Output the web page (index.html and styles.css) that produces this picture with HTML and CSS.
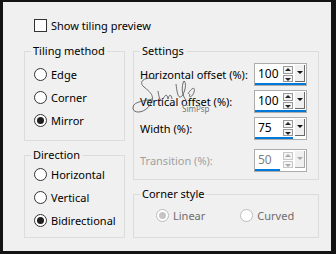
FILE: index.html
```html
<!DOCTYPE html>
<html lang="en">
<head>
    <meta charset="UTF-8">
    <title>Tiling options</title>
    <link rel="stylesheet" href="styles.css">
</head>
<body>
<div class="frame">
    <label class="check-row"><span class="checkbox"></span>Show tiling preview</label>
    <div class="columns">
        <div class="col col-left">
            <fieldset class="group tiling">
                <legend>Tiling method</legend>
                <div class="radio"><span class="mark"></span>Edge</div>
                <div class="radio"><span class="mark"></span>Corner</div>
                <div class="radio"><span class="mark on"></span>Mirror</div>
            </fieldset>
            <fieldset class="group direction">
                <legend>Direction</legend>
                <div class="radio"><span class="mark"></span>Horizontal</div>
                <div class="radio"><span class="mark"></span>Vertical</div>
                <div class="radio"><span class="mark on"></span>Bidirectional</div>
            </fieldset>
        </div>
        <div class="col col-right">
            <fieldset class="group settings">
                <legend>Settings</legend>
                <div class="row">
                    <span class="label">Horizontal offset (%):</span>
                    <div class="spin">
                        <div class="spin-top"><span class="value">100</span><span class="arrows"><span class="up"></span><span class="down"></span></span><span class="drop"></span></div>
                        <span class="bar" style="width:51px"></span>
                    </div>
                </div>
                <div class="row">
                    <span class="label">Vertical offset (%):</span>
                    <div class="spin">
                        <div class="spin-top"><span class="value">100</span><span class="arrows"><span class="up"></span><span class="down"></span></span><span class="drop"></span></div>
                        <span class="bar" style="width:51px"></span>
                    </div>
                </div>
                <div class="row">
                    <span class="label">Width (%):</span>
                    <div class="spin">
                        <div class="spin-top"><span class="value">75</span><span class="arrows"><span class="up"></span><span class="down"></span></span><span class="drop"></span></div>
                        <span class="bar" style="width:38px"></span>
                    </div>
                </div>
                <div class="row disabled">
                    <span class="label">Transition (%):</span>
                    <div class="spin">
                        <div class="spin-top"><span class="value">50</span><span class="arrows"><span class="up"></span><span class="down"></span></span><span class="drop"></span></div>
                        <span class="bar" style="width:25px"></span>
                    </div>
                </div>
            </fieldset>
            <fieldset class="group corner">
                <legend>Corner style</legend>
                <div class="corner-row">
                    <div class="radio off"><span class="mark on"></span>Linear</div>
                    <div class="radio off"><span class="mark"></span>Curved</div>
                </div>
            </fieldset>
        </div>
    </div>

    <!-- signature watermark -->
    <div class="stamp">
        <svg width="80" height="45" viewBox="0 0 80 45">
            <path d="M26 5 C14 2 8 8 14 13 C20 18 26 22 20 31 C14 40 2 40 3 33 C4 27 16 27 22 25 M28 17 C29 23 30 29 33 25 C35 21 37 19 38 25 C39 21 41 19 42 25 M46 10 C47 18 48 26 52 22 C55 18 57 9 54 7 C51 12 52 22 56 26 M58 20 C61 14 66 12 64 18 C62 24 58 24 60 20" fill="none" stroke="#4a4a4a" stroke-width="0.8"/>
        </svg>
        <span class="stamp-text">SimPsp</span>
    </div>
</div>
</body>
</html>
```

FILE: styles.css
```css
body {
    margin: 0;
    font-family: 'Noto Sans', sans-serif;
    font-size: 11px;
    color: #000;
}
.frame {
    position: relative;
    width: 336px;
    height: 254px;
    box-sizing: border-box;
    border-style: solid;
    border-color: #141414;
    border-width: 2px 5px 3px 3px;
    background-color: #f0f0f0;
    padding: 17px 0 0 21px;
}
.check-row {
    display: flex;
    align-items: center;
    gap: 4px;
    height: 13px;
    margin-left: 10px;
}
.checkbox {
    width: 11px;
    height: 11px;
    border: 1px solid #333;
    background-color: #fff;
}
.columns {
    display: flex;
    gap: 8px;
    margin-top: 11px;
}
.col {
    display: flex;
    flex-direction: column;
    gap: 6px;
}
.col-left {
    width: 101px;
}
.col-right {
    width: 186px;
}

/* group boxes */
.group {
    margin: 0;
    min-width: 0;
    box-sizing: border-box;
    border: 1px solid #dcdcdc;
    padding: 0 0 0 6px;
}
.group legend {
    padding: 0 2px;
    line-height: 16px;
}
.tiling {
    height: 98px;
    padding-top: 4px;
}
.direction {
    height: 91px;
}
.settings {
    height: 137px;
    padding-top: 2px;
    padding-right: 11px;
}
.corner {
    height: 52px;
    padding-top: 2px;
}

/* radio buttons */
.radio {
    display: flex;
    align-items: center;
    gap: 4px;
    height: 23px;
    margin-left: 3px;
}
.mark {
    width: 11px;
    height: 11px;
    border: 1px solid #333;
    border-radius: 50%;
    background-color: #fff;
    display: flex;
    align-items: center;
    justify-content: center;
}
.mark.on::after {
    content: "";
    width: 7px;
    height: 7px;
    border-radius: 50%;
    background-color: #1f1f1f;
}
.radio.off {
    color: #6d6d6d;
}
.radio.off .mark {
    border-color: #bcbcbc;
}
.radio.off .mark.on::after {
    background-color: #c4c4c4;
}
.corner-row {
    display: flex;
    margin-left: 13px;
    gap: 32px;
}

/* settings rows */
.row {
    display: flex;
    align-items: center;
    justify-content: space-between;
    height: 27px;
}
.row.disabled {
    margin-top: 5px;
}
.row.disabled .label {
    color: #a0a0a0;
}
.spin {
    width: 53px;
    height: 23px;
    box-sizing: border-box;
    border: 1px solid #acacac;
    background-color: #fff;
    display: flex;
    flex-direction: column;
}
.spin-top {
    display: flex;
    height: 18px;
}
.value {
    flex: 1;
    padding-left: 3px;
    font-size: 12px;
    line-height: 19px;
}
.arrows {
    display: flex;
    flex-direction: column;
    margin-top: 2px;
    margin-right: 2px;
}
.up, .down {
    width: 8px;
    height: 6px;
    border: 1px solid #999;
    background-color: #f4f4f4;
    position: relative;
}
.down {
    margin-top: 1px;
}
.up::after, .down::after {
    content: "";
    position: absolute;
    left: 1px;
    border-left: 3px solid transparent;
    border-right: 3px solid transparent;
}
.up::after {
    top: 1px;
    border-bottom: 3px solid #222;
}
.down::after {
    top: 2px;
    border-top: 3px solid #222;
}
.drop {
    width: 10px;
    height: 17px;
    margin-top: 1px;
    margin-right: 1px;
    background-color: #f0f0f0;
    border-right: 1px solid #6a6a6a;
    border-bottom: 1px solid #6a6a6a;
    box-sizing: border-box;
    position: relative;
}
.drop::after {
    content: "";
    position: absolute;
    left: 2px;
    top: 6px;
    border-left: 3px solid transparent;
    border-right: 3px solid transparent;
    border-top: 3px solid #111;
}
.bar {
    height: 3px;
    margin-top: 1px;
    background-color: #0078d7;
}
.row.disabled .value {
    color: #808080;
}
.row.disabled .up::after {
    border-bottom-color: #a8a8a8;
}
.row.disabled .down::after,
.row.disabled .drop::after {
    border-top-color: #a8a8a8;
}
.row.disabled .up,
.row.disabled .down {
    border-color: #c8c8c8;
}
.row.disabled .drop {
    border-color: #a8a8a8;
}

/* watermark over the settings box */
.stamp {
    position: absolute;
    left: 127px;
    top: 72px;
}
.stamp-text {
    position: absolute;
    left: 52px;
    top: 29px;
    font-size: 8px;
    color: #777;
}
```
